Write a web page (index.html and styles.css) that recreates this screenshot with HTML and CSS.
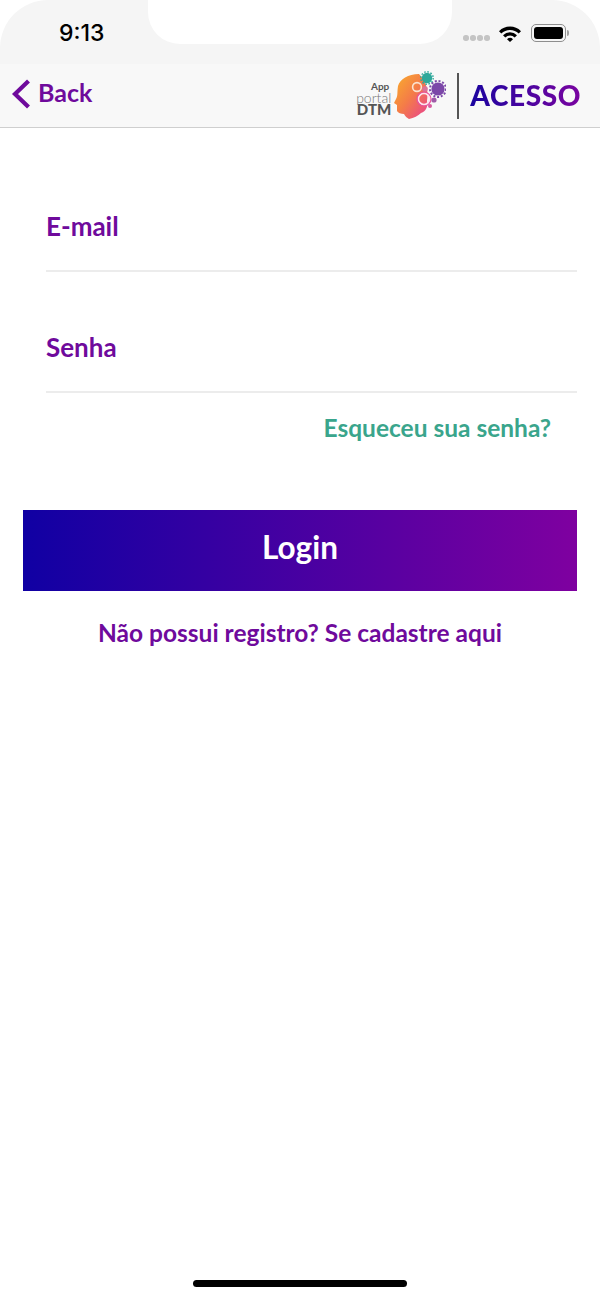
FILE: index.html
```html
<!DOCTYPE html>
<html lang="en">
<head>
    <meta charset="UTF-8">
    <meta name="viewport" content="width=device-width, initial-scale=1.0">
    <title>Acesso</title>
    <link rel="stylesheet" href="styles.css">
</head>
<body>
    <div class="screen">
        <div class="status">
            <div class="status-left"><span class="time">9:13</span></div>
            <div class="notch"></div>
            <div class="status-right">
                <div class="signal"><i></i><i></i><i></i><i></i></div>
                <svg class="wifi" width="24" height="17" viewBox="0 0 24 17">
                    <path d="M1 6.2 A15.5 15.5 0 0 1 23 6.2 L20.7 8.6 A12.2 12.2 0 0 0 3.3 8.6 Z" fill="#000"/>
                    <path d="M5 10.2 A10 10 0 0 1 19 10.2 L16.7 12.5 A6.8 6.8 0 0 0 7.3 12.5 Z" fill="#000"/>
                    <path d="M9 14.2 A4.3 4.3 0 0 1 15 14.2 L12 17 Z" fill="#000"/>
                </svg>
                <div class="battery"><div class="battery-fill"></div></div>
                <div class="battery-cap"></div>
            </div>
        </div>

        <div class="navbar">
            <a class="back">
                <svg width="22" height="32" viewBox="0 0 22 32">
                    <path d="M19.5 3 L6 16 L19.5 29" fill="none" stroke="#6f0a9c" stroke-width="4.2"/>
                </svg>
                <span class="back-text">Back</span>
            </a>
            <div class="brand">
                <div class="brand-text">
                    <span class="b-app">App</span>
                    <span class="b-portal">portal</span>
                    <span class="b-dtm">DTM</span>
                </div>
                <svg class="head" width="54" height="50" viewBox="0 0 54 50">
                    <defs>
                        <linearGradient id="headGrad" x1="0" y1="0" x2="1" y2="1">
                            <stop offset="0" stop-color="#f9b02a"/>
                            <stop offset="0.5" stop-color="#f47c48"/>
                            <stop offset="1" stop-color="#e83f92"/>
                        </linearGradient>
                    </defs>
                    <!-- head, facing left -->
                    <path d="M27 3 C16 3 8 8 6 15 C5 21 6 25 4 28 L2 32 L5 34 L5 40 C6 42 9 43 12 43 C13 45 15 47 17 48 C22 47 26 45 29 42 C34 40 36 36 35 30 C36 22 36 12 27 3 Z" fill="url(#headGrad)"/>
                    <!-- gears -->
                    <circle cx="35" cy="7" r="5.2" fill="#2ea89a"/>
                    <circle cx="35" cy="7" r="6.2" fill="none" stroke="#2ea89a" stroke-width="1.4" stroke-dasharray="1.6 1.6"/>
                    <circle cx="46" cy="18" r="6.6" fill="#7b47a8"/>
                    <circle cx="46" cy="18" r="8" fill="none" stroke="#7b47a8" stroke-width="2" stroke-dasharray="2 1.8"/>
                    <circle cx="25" cy="16" r="4.4" fill="none" stroke="#fbe3d0" stroke-width="1.6"/>
                    <circle cx="33" cy="18" r="2.8" fill="#d9739a"/>
                    <circle cx="32" cy="28" r="5.6" fill="none" stroke="#fde3ee" stroke-width="1.8"/>
                    <circle cx="32" cy="28" r="7" fill="none" stroke="#e8529c" stroke-width="1.2"/>
                    <circle cx="42" cy="29" r="2.6" fill="#a05aa8"/>
                    <circle cx="38" cy="35" r="2" fill="#d85aa0"/>
                </svg>
                <div class="brand-line"></div>
                <span class="brand-title">ACESSO</span>
            </div>
        </div>

        <form class="form">
            <div class="field"><span class="label">E-mail</span></div>
            <div class="field"><span class="label">Senha</span></div>
            <div class="forgot">Esqueceu sua senha?</div>
            <button type="button" class="login">Login</button>
            <div class="register">Não possui registro? Se cadastre aqui</div>
        </form>

        <div class="home-bar"></div>
    </div>
</body>
</html>
```
FILE: styles.css
```css
* {
    box-sizing: border-box;
}
html, body {
    margin: 0;
    padding: 0;
    background-color: #fff;
}
body {
    font-family: 'Lato', 'Noto Sans', sans-serif;
}
.screen {
    width: 600px;
    height: 1299px;
    display: flex;
    flex-direction: column;
    overflow: hidden;
}

/* status bar */
.status {
    height: 64px;
    display: flex;
    background-color: #f5f5f5;
    border-radius: 48px 48px 0 0;
}
.status-left {
    width: 148px;
    padding: 19px 0 0 59px;
}
.time {
    font-family: 'Inter', 'Liberation Sans', sans-serif;
    font-size: 23px;
    line-height: 28px;
    font-weight: 500;
    color: #000;
}
.notch {
    width: 304px;
    height: 44px;
    background-color: #fff;
    border-radius: 0 0 32px 32px;
}
.status-right {
    flex: 1;
    display: flex;
    align-items: center;
    height: 64px;
    padding: 0 0 0 11px;
    margin-top: 1px;
}
.signal {
    display: flex;
    gap: 1.5px;
    margin: 10px 8px 0 0;
}
.signal i {
    width: 5.5px;
    height: 5.5px;
    border-radius: 50%;
    background-color: #c4c4c4;
}
.wifi {
    margin-right: 9px;
}
.battery {
    width: 35px;
    height: 18px;
    padding: 2px;
    border: 1px solid #8e8e8e;
    border-radius: 5px;
}
.battery-fill {
    height: 100%;
    background-color: #000;
    border-radius: 3px;
}
.battery-cap {
    width: 2px;
    height: 6px;
    margin-left: 1px;
    background-color: #a0a0a0;
    border-radius: 0 2px 2px 0;
}

/* nav bar */
.navbar {
    height: 64px;
    display: flex;
    justify-content: space-between;
    align-items: center;
    background-color: #f8f8f8;
    border-bottom: 1px solid #cfcfcf;
    padding: 0 19px 0 9px;
}
.back {
    display: flex;
    align-items: center;
    gap: 7px;
    margin-bottom: 4px;
    color: #6f0a9c;
    font-size: 25px;
    font-weight: 700;
}
.back-text {
    margin-bottom: 4px;
}
.brand {
    display: flex;
    align-items: center;
}
.brand-text {
    display: flex;
    flex-direction: column;
    align-items: flex-end;
    color: #555;
    margin-top: 4px;
}
.b-app {
    font-size: 10px;
    line-height: 12px;
    font-weight: 700;
    margin-right: 2px;
}
.b-portal {
    font-size: 14px;
    line-height: 11px;
    font-weight: 300;
    color: #777;
}
.b-dtm {
    font-size: 15px;
    line-height: 13px;
    font-weight: 900;
}
.head {
    margin-left: 1px;
}
.brand-line {
    width: 2px;
    height: 46px;
    background-color: #555;
    margin: 0 11px;
}
.brand-title {
    font-size: 28px;
    font-weight: 900;
    letter-spacing: 0.6px;
    margin-bottom: 2px;
    color: transparent;
    background: linear-gradient(90deg, #1a049f, #7a04a0);
    -webkit-background-clip: text;
    background-clip: text;
}

/* form */
.form {
    padding: 0 23px;
    display: flex;
    flex-direction: column;
}
.field {
    height: 121px;
    margin-left: 23px;
    display: flex;
    align-items: flex-end;
    padding-bottom: 28px;
    border-bottom: 2px solid #ececec;
}
.field:first-child {
    height: 144px;
}
.label {
    color: #6f0a9c;
    font-size: 26px;
    font-weight: 700;
}
.forgot {
    color: #3aa58c;
    font-size: 24.5px;
    font-weight: 700;
    text-align: right;
    padding: 19px 26px 0 0;
    line-height: 32px;
}
.login {
    height: 81px;
    margin-top: 66px;
    padding: 0 0 7px;
    border: none;
    color: #fff;
    font-family: inherit;
    font-size: 31.5px;
    font-weight: 700;
    background: linear-gradient(90deg, #1000a3, #7f00a0);
}
.register {
    color: #6f0a9c;
    font-size: 24.5px;
    font-weight: 700;
    text-align: center;
    margin-top: 26px;
    line-height: 32px;
}

.home-bar {
    width: 214px;
    height: 7px;
    border-radius: 4px;
    background-color: #000;
    margin: auto auto 12px;
}
```
